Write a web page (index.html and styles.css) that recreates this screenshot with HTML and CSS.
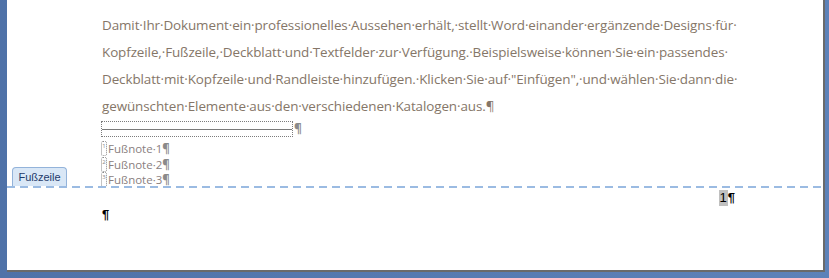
FILE: index.html
```html
<!DOCTYPE html>
<html lang="de">
<head>
<meta charset="utf-8">
<link rel="stylesheet" href="styles.css">
</head>
<body>
<div class="page">
  <div class="body-area">
    <p class="para">
      <span class="line">Damit·Ihr·Dokument·ein·professionelles·Aussehen·erhält,·stellt·Word·einander·ergänzende·Designs·für·</span>
      <span class="line">Kopfzeile,·Fußzeile,·Deckblatt·und·Textfelder·zur·Verfügung.·Beispielsweise·können·Sie·ein·passendes·</span>
      <span class="line">Deckblatt·mit·Kopfzeile·und·Randleiste·hinzufügen.·Klicken·Sie·auf·"Einfügen",·und·wählen·Sie·dann·die·</span>
      <span class="line">gewünschten·Elemente·aus·den·verschiedenen·Katalogen·aus.<span class="pil">¶</span></span>
    </p>
    <div class="sep-row">
      <div class="sep-box"><div class="sep-line"></div></div>
      <span class="sep-pil">¶</span>
    </div>
    <div class="notes">
      <div class="note"><span class="ref">1</span>Fußnote·1<span class="npil">¶</span></div>
      <div class="note"><span class="ref">2</span>Fußnote·2<span class="npil">¶</span></div>
      <div class="note"><span class="ref">3</span>Fußnote·3<span class="npil">¶</span></div>
    </div>
  </div>
  <div class="footer">
    <div class="tab">Fußzeile</div>
    <div class="pagenum"><span class="num">1</span><span class="bpil">¶</span></div>
    <div class="empty"><span class="bpil">¶</span></div>
  </div>
</div>
</body>
</html>
```
FILE: styles.css
```css
html, body {
  margin: 0;
  padding: 0;
}
body {
  width: 829px;
  height: 278px;
  overflow: hidden;
  background: linear-gradient(90deg, #4f72a8 0%, #5d82b9 100%);
  font-family: "Open Sans", "Liberation Sans", sans-serif;
}
.page {
  margin-left: 7px;
  width: 816px;
  height: 270px;
  background: #fff;
  border-right: 2px solid #6a6a6a;
  border-bottom: 2px solid #6a6a6a;
  display: flex;
  flex-direction: column;
  position: relative;
}
.body-area {
  padding-left: 95px;
  padding-top: 12px;
  height: 186px;
  flex: none;
  box-sizing: border-box;
}
.para {
  margin: 0;
  color: #857668;
  font-size: 13.45px;
  line-height: 27px;
  letter-spacing: -0.1px;
}
.line {
  display: block;
  white-space: nowrap;
}
.pil {
  color: #857668;
}
.sep-row {
  display: flex;
  align-items: center;
  height: 17px;
  margin-left: -1px;
}
.sep-box {
  width: 190px;
  height: 14px;
  border: 1px dotted #7c7c7c;
  display: flex;
  align-items: center;
}
.sep-line {
  width: 100%;
  height: 1px;
  margin-top: 1px;
  background: #7a7a7a;
}
.sep-pil {
  margin-left: 1px;
  font-size: 12px;
  font-weight: bold;
  color: #8a8a8a;
  line-height: 14px;
}
.notes {
  padding-top: 4px;
  margin-left: -1px;
}
.note {
  height: 15.5px;
  line-height: 15.5px;
  font-size: 11.5px;
  color: #8a8080;
  white-space: nowrap;
  display: flex;
  align-items: center;
}
.ref {
  display: inline-block;
  width: 4px;
  height: 13px;
  border: 1px dotted #8a8a8a;
  border-radius: 2px;
  font-size: 6px;
  line-height: 8px;
  text-align: center;
  color: #8a8a8a;
  margin-right: 1px;
  overflow: hidden;
}
.npil {
  font-weight: bold;
  color: #8a8a8a;
}
.footer {
  flex: 1;
  background-image: repeating-linear-gradient(90deg, #9bbbe2 0 8px, transparent 8px 13px);
  background-size: 100% 2px;
  background-repeat: no-repeat;
  background-position: 0 0;
  padding-top: 4px;
}
.tab {
  position: absolute;
  left: 5px;
  top: 167px;
  width: 55px;
  height: 19px;
  box-sizing: border-box;
  background: #d9e7f6;
  border: 1px solid #93b3da;
  border-bottom: none;
  border-radius: 4px 4px 0 0;
  font-family: "Liberation Sans", sans-serif;
  font-size: 11px;
  color: #1e3a6a;
  text-align: center;
  line-height: 19px;
}
.pagenum {
  display: flex;
  justify-content: flex-end;
  padding-right: 88px;
  height: 16px;
  line-height: 14px;
  font-size: 13px;
  font-family: "Liberation Sans", sans-serif;
}
.num {
  background: #c0c0c0;
  color: #000;
  padding: 0 1px;
  height: 16px;
  line-height: 16px;
}
.bpil {
  font-weight: bold;
  color: #000;
  line-height: 16px;
}
.empty {
  padding-left: 95px;
  padding-top: 1px;
  font-size: 13px;
  font-family: "Liberation Sans", sans-serif;
}
```
